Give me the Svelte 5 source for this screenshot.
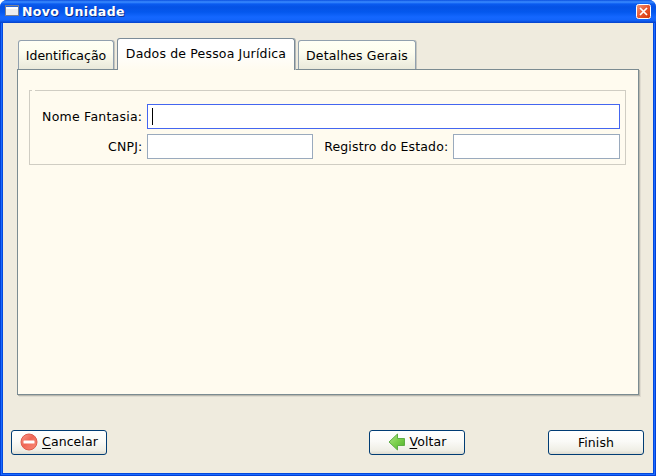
<script>
  const tabs = [
    { label: 'Identificação', width: 96, spacing: 0.03 },
    { label: 'Dados de Pessoa Jurídica', width: 178, spacing: 0.17, active: true },
    { label: 'Detalhes Gerais', width: 118, spacing: 0.15 }
  ];
  let name = $state('');
  let cnpj = $state('');
  let registro = $state('');
</script>

<div class="window">
  <header>
    <svg class="app" width="14" height="11" viewBox="0 0 14 11">
      <rect x=".5" y=".5" width="13" height="10" fill="#eee" stroke="#7b8190" />
      <path d="M1 1h12v1H1z" fill="#2764d8" />
      <path d="M1 2h12v2H1z" fill="#fff" />
    </svg>
    <h1>Novo Unidade</h1>
    <button class="close" aria-label="Fechar">
      <svg width="15" height="15" viewBox="0 0 15 15">
        <defs>
          <linearGradient id="red" x1="0" y1="0" x2="1" y2="1">
            <stop offset="0" stop-color="#f39a7c" />
            <stop offset=".5" stop-color="#e9562f" />
            <stop offset="1" stop-color="#cf3509" />
          </linearGradient>
        </defs>
        <rect x=".5" y=".5" width="14" height="14" rx="2" fill="url(#red)" stroke="#fff" />
        <path d="M4 4l7 7M11 4l-7 7" stroke="#fff" stroke-width="1.7" />
      </svg>
    </button>
  </header>

  <main>
    <nav>
      {#each tabs as tab}
        <div class="tab" class:active={tab.active} style:width="{tab.width}px" style:letter-spacing="{tab.spacing}px">{tab.label}</div>
      {/each}
    </nav>
    <section class="panel">
      <div class="group">
        <div class="row">
          <label class="wide" for="nome">Nome Fantasia:</label>
          <div class="field focus"><i class="caret"></i><input id="nome" bind:value={name} /></div>
        </div>
        <div class="row">
          <label for="cnpj">CNPJ:</label>
          <div class="field short"><input id="cnpj" bind:value={cnpj} /></div>
          <label class="second" for="registro">Registro do Estado:</label>
          <div class="field"><input id="registro" bind:value={registro} /></div>
        </div>
      </div>
    </section>
    <footer>
      <button class="btn">
        <svg width="18" height="18" viewBox="0 0 18 18">
          <defs>
            <linearGradient id="stop" x1="0" y1="0" x2="1" y2="1">
              <stop offset="0" stop-color="#fa9c8c" />
              <stop offset=".45" stop-color="#ee6656" />
              <stop offset=".55" stop-color="#f2705f" />
              <stop offset="1" stop-color="#f98b77" />
            </linearGradient>
          </defs>
          <circle cx="9" cy="9" r="8" fill="url(#stop)" stroke="#e05c4c" />
          <rect x="3.5" y="7.5" width="11" height="3" rx=".5" fill="#fff" />
        </svg>
        <span><u>C</u>ancelar</span>
      </button>
      <button class="btn back">
        <svg width="18" height="18" viewBox="0 0 18 18">
          <defs>
            <linearGradient id="green" x1="0" y1="0" x2="1" y2="1">
              <stop offset="0" stop-color="#b3e58d" />
              <stop offset=".5" stop-color="#7bd04b" />
              <stop offset="1" stop-color="#4fae2c" />
            </linearGradient>
          </defs>
          <path d="M1 9L9.5 1v4.5h7v7h-7V17z" fill="url(#green)" stroke="#5fae45" stroke-linejoin="round" />
        </svg>
        <span><u>V</u>oltar</span>
      </button>
      <button class="btn finish"><span>Finish</span></button>
    </footer>
  </main>
</div>

<style>
  :global(body) {
    background: #fff;
  }
  .window, .window * {
    box-sizing: border-box;
  }
  .window {
    width: 656px;
    height: 476px;
    display: flex;
    flex-direction: column;
    overflow: hidden;
    border-radius: 7px 7px 0 0;
    background: #0450e8;
    font-family: "DejaVu Sans", sans-serif;
    font-size: 12.5px;
    color: #000;
  }
  header {
    flex: none;
    height: 23px;
    display: flex;
    align-items: flex-start;
    padding: 0 5px;
    background: linear-gradient(#0a4fe0 0, #3b8cff 2px, #0a5bf0 4px, #0552e5 7px, #0458ee 12px, #1467ff 17px, #1264fb 20px, #0441c9 23px);
  }
  .app {
    margin-top: 5px;
  }
  h1 {
    flex: 1;
    margin: 2px 0 0 3px;
    font-size: 12.5px;
    line-height: 19px;
    font-weight: bold;
    letter-spacing: 0.38px;
    color: #fff;
    text-shadow: 1px 1px #0a2f8e;
  }
  .close {
    margin: 4px 0 0;
    padding: 0;
    border: 0;
    background: none;
    height: 15px;
  }
  .close svg {
    display: block;
  }
  main {
    flex: 1;
    display: flex;
    flex-direction: column;
    margin: 0 3px 3px;
    padding: 15px 14px 0;
    background: #efebde;
    box-shadow: 0 0 0 1px #0348dd, 0 0 0 2px #1a6bff, 0 0 0 3px #0340d6;
    clip-path: inset(0 -3px -3px -3px);
  }
  nav {
    display: flex;
    align-items: flex-end;
    height: 31px;
    padding-left: 1px;
    position: relative;
  }
  .tab {
    height: 29px;
    line-height: 29px;
    text-align: center;
    white-space: nowrap;
    border: 1px solid #91a0ae;
    border-bottom: 0;
    border-radius: 3px 3px 0 0;
    background: linear-gradient(#fffff4 0, #fdfdef 40%, #e9e9da 100%);
    box-shadow: 1px 0 #c5c6be;
    margin-right: 2px;
  }
  .tab.active {
    height: 32px;
    margin: 0 3px -1px 1px;
    z-index: 1;
    border-color: #7b8b98;
    background: linear-gradient(#fff 0, #fff 35%, #fffbef 100%);
    box-shadow: 1px 0 #b5b9b8;
  }
  .panel {
    width: 622px;
    height: 326px;
    padding: 20px 12px 0 11px;
    border: 1px solid #7b8b91;
    background: #fffbef;
    box-shadow: 1px 1px #b9b8ae, 2px 2px #dfdbd0;
  }
  .group {
    position: relative;
    width: 597px;
    height: 75px;
    padding: 13px 5px 0 0;
    border: 1px solid #d0cdc3;
  }
  .group::before {
    content: "";
    position: absolute;
    left: 2px;
    top: -1px;
    width: 3px;
    height: 1px;
    background: #fffbef;
  }
  .row {
    display: flex;
    align-items: center;
    height: 25px;
    margin-bottom: 5px;
  }
  label {
    width: 113px;
    margin-right: 4px;
    padding-right: 0.7px;
    text-align: right;
    white-space: nowrap;
    letter-spacing: 0.14px;
  }
  label.wide {
    letter-spacing: 0.24px;
  }
  label.second {
    width: 136px;
  }
  .field {
    flex: 1;
    height: 25px;
    display: flex;
    align-items: center;
    padding-left: 4px;
    border: 1px solid #9aaabd;
    background: #fff;
  }
  .field.short {
    flex: 0 0 166px;
  }
  .field.focus {
    border-color: #4466f0;
  }
  .caret {
    width: 1px;
    height: 17px;
    background: #000;
  }
  input {
    flex: 1;
    min-width: 0;
    border: 0;
    padding: 0;
    outline: 0;
    background: none;
    font: inherit;
  }
  footer {
    display: flex;
    margin: 35px -8px 0 -6px;
  }
  .btn {
    width: 96px;
    height: 25px;
    display: flex;
    align-items: center;
    justify-content: center;
    gap: 4px;
    padding: 0 0 1px;
    border: 1px solid #003c74;
    border-radius: 3px;
    background: linear-gradient(#fff 0, #fafaf7 45%, #efeee5 85%, #dedbd0 100%);
    font: inherit;
    letter-spacing: 0.08px;
    color: #000;
  }
  .btn svg {
    flex: none;
  }
  .btn span {
    padding-bottom: 2px;
  }
  .btn u {
    text-underline-offset: 2px;
    text-decoration-skip-ink: none;
  }
  .back {
    margin-left: 262px;
  }
  .finish {
    margin-left: 83px;
    padding: 0;
  }
  .finish span {
    padding-bottom: 0;
  }
</style>
